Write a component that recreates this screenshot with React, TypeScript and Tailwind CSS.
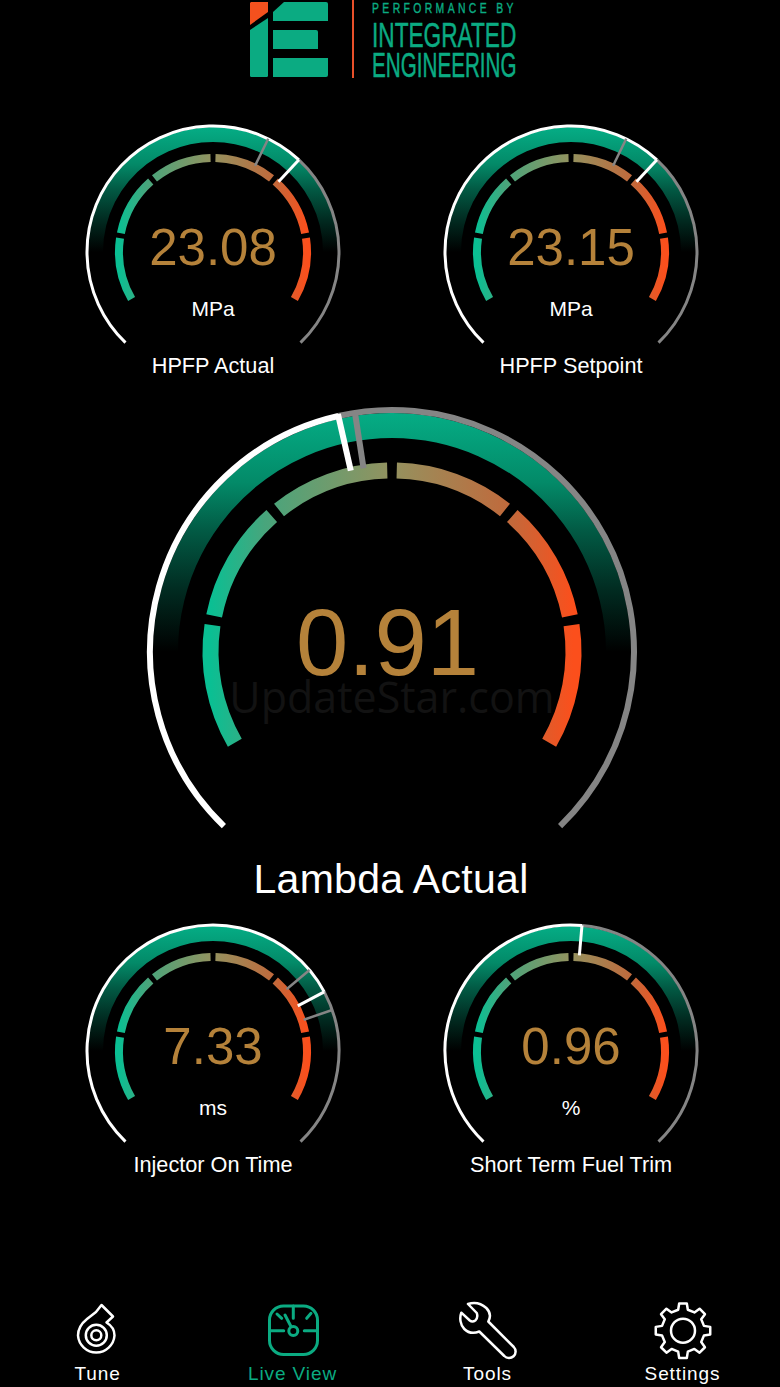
import React from 'react';

const polar = (cx: number, cy: number, r: number, deg: number) => {
  const a = ((deg - 90) * Math.PI) / 180;
  return [cx + r * Math.cos(a), cy + r * Math.sin(a)];
};

const arc = (cx: number, cy: number, r: number, from: number, to: number) => {
  const [x1, y1] = polar(cx, cy, r, from);
  const [x2, y2] = polar(cx, cy, r, to);
  return `M${x1} ${y1} A${r} ${r} 0 ${to - from > 180 ? 1 : 0} 1 ${x2} ${y2}`;
};

const spoke = (cx: number, cy: number, r1: number, r2: number, deg: number) => {
  const [x1, y1] = polar(cx, cy, r1, deg);
  const [x2, y2] = polar(cx, cy, r2, deg);
  return `M${x1} ${y1} L${x2} ${y2}`;
};

const SEGMENTS = [-120, -80, -40, 0, 40, 80];

interface DialProps {
  id: string;
  width: number;
  height: number;
  cx: number;
  cy: number;
  scale: number;
  white: number;
  grays: number[];
}

const Dial: React.FC<DialProps> = ({ id, width, height, cx, cy, scale, white, grays }) => {
  const ringR = scale === 1 ? 126 : 242;
  const ringW = scale === 1 ? 3 : 6;
  const bandR = scale === 1 ? 117.5 : 226.5;
  const bandW = scale === 1 ? 15 : 25;
  const segR = scale === 1 ? 94 : 181.5;
  const segW = scale === 1 ? 8 : 16;
  const needleOuter = scale === 1 ? 126 : 244;
  const needleInner = scale === 1 ? 96 : 186;

  return (
    <svg width={width} height={height} viewBox={`0 0 ${width} ${height}`} className="block">
      <defs>
        <linearGradient id={`${id}-band`} gradientUnits="userSpaceOnUse" x1="0" y1={cy - ringR} x2="0" y2={cy}>
          <stop offset="0" stopColor="#05ae86" />
          <stop offset="0.3" stopColor="#038a68" />
          <stop offset="0.5" stopColor="#025a44" />
          <stop offset="0.75" stopColor="#012a20" />
          <stop offset="1" stopColor="#000000" />
        </linearGradient>
        <linearGradient id={`${id}-seg`} gradientUnits="userSpaceOnUse" x1={cx - segR} y1="0" x2={cx + segR} y2="0">
          <stop offset="0" stopColor="#0abf93" />
          <stop offset="0.15" stopColor="#48a57c" />
          <stop offset="0.5" stopColor="#94925f" />
          <stop offset="0.82" stopColor="#c06a3c" />
          <stop offset="1" stopColor="#fb4f1c" />
        </linearGradient>
      </defs>
      <path d={arc(cx, cy, bandR, -100, 100)} fill="none" stroke={`url(#${id}-band)`} strokeWidth={bandW} />
      {SEGMENTS.slice(0, 5).map((deg, i) => (
        <path key={deg} d={arc(cx, cy, segR, deg + (i === 0 ? 0 : 1.5), SEGMENTS[i + 1] - 1.5)} fill="none" stroke={`url(#${id}-seg)`} strokeWidth={segW} />
      ))}
      <path d={arc(cx, cy, segR, 81.5, 120)} fill="none" stroke={`url(#${id}-seg)`} strokeWidth={segW} />
      <path d={arc(cx, cy, ringR, white, 136)} fill="none" stroke="#858585" strokeWidth={ringW} />
      <path d={arc(cx, cy, ringR, -136, white)} fill="none" stroke="#ffffff" strokeWidth={ringW} />
      {grays.map((deg) => (
        <path key={deg} d={spoke(cx, cy, needleOuter, needleInner, deg)} stroke="#858585" strokeWidth={scale === 1 ? 2.5 : 6} />
      ))}
      <path d={spoke(cx, cy, needleOuter, needleInner, white)} stroke="#ffffff" strokeWidth={scale === 1 ? 3 : 6} />
    </svg>
  );
};

interface SmallGaugeProps {
  id: string;
  value: string;
  unit: string;
  label: string;
  white: number;
  grays: number[];
}

const SmallGauge: React.FC<SmallGaugeProps> = ({ id, value, unit, label, white, grays }) => (
  <div className="w-[260px]">
    <div className="relative h-[226px]">
      <Dial id={id} width={260} height={226} cx={130} cy={132} scale={1} white={white} grays={grays} />
      <div className="absolute left-0 top-[98px] w-full text-center text-[51px] leading-[60px] text-[#b5823a]">{value}</div>
      <div className="absolute left-0 top-[177px] w-full text-center text-[21px] leading-[24px] text-white">{unit}</div>
    </div>
    <div className="mt-[8px] text-center text-[21.7px] leading-[24px] text-white">{label}</div>
  </div>
);

const Logo = () => (
  <div className="flex h-[120px] items-start pl-[250px]">
    <svg width="80" height="80" viewBox="0 0 80 80" className="block shrink-0">
      <path d="M1 2 H18 V12 L0 25 V3 Z" fill="#f4511e" />
      <path d="M0 30 L18 18 V75.5 Q18 77 16.5 77 H1.5 Q0 77 0 75.5 Z" fill="#0bab82" />
      <path d="M23 12 L34 2 H76 Q78 2 78 4 V21 H23 Z" fill="#0bab82" />
      <path d="M23 30 H66 Q68 30 68 32 V49 H23 Z" fill="#0bab82" />
      <path d="M23 58 H78 V75 Q78 77 76 77 H23 Z" fill="#0bab82" />
    </svg>
    <div className="ml-[22px] h-[78px] w-[2px] shrink-0 bg-[#e8502a]" />
    <div className="ml-[18px] w-[150px] text-[#0bab82]">
      <div className="h-[16px] origin-left scale-x-[0.74] whitespace-nowrap text-[14px] leading-[16px] tracking-[4.6px] [-webkit-text-stroke:0.4px_#0bab82]">PERFORMANCE BY</div>
      <div className="mt-[3px] h-[29px] origin-left scale-x-[0.647] whitespace-nowrap text-[35px] leading-[32px] [-webkit-text-stroke:0.5px_#0bab82]">INTEGRATED</div>
      <div className="h-[30px] origin-left scale-x-[0.59] whitespace-nowrap text-[35px] leading-[34px] [-webkit-text-stroke:0.5px_#0bab82]">ENGINEERING</div>
    </div>
  </div>
);

const gearPath = () => {
  const pts: string[] = [];
  for (let i = 0; i < 8; i++) {
    const c = i * 45;
    const steps: [number, number][] = [
      [21.5, c - 13],
      [27.5, c - 8],
      [27.5, c + 8],
      [21.5, c + 13],
    ];
    steps.forEach(([r, deg]) => {
      const [x, y] = polar(30, 30, r, deg);
      pts.push(`${pts.length === 0 ? 'M' : 'L'}${x} ${y}`);
    });
  }
  return pts.join(' ') + ' Z';
};

const TuneIcon = () => (
  <svg width="60" height="60" viewBox="0 0 60 60" fill="none" stroke="#ffffff" strokeWidth="2.5" strokeLinejoin="round" className="block">
    <path d="M33.5 7 L45 18.5 L38.5 24.5 C43.5 27.5 46.5 32 46.5 37.5 A18.3 18.3 0 0 1 10 37.5 C10 30 14 25 19 21 L28 14 Z" />
    <circle cx="28.3" cy="37.3" r="10.5" />
    <circle cx="28.3" cy="37.3" r="5" />
  </svg>
);

const LiveIcon = () => (
  <svg width="60" height="60" viewBox="0 0 60 60" fill="none" stroke="#0bab82" strokeWidth="3" strokeLinecap="round" className="block">
    <rect x="6.5" y="8" width="48" height="48.5" rx="14" />
    <path d="M30.3 8 V20.3 M6.5 32.7 H20.7 M41.3 32.7 H54.5 M14 16 L18.7 20.3 M43.7 20.3 L48 15.3 M22 17 L28 28.5" />
    <circle cx="30.3" cy="33" r="4.5" />
  </svg>
);

const ToolsIcon = () => (
  <svg width="60" height="60" viewBox="0.7 -2 60 60" fill="none" stroke="#ffffff" strokeWidth="2.5" strokeLinejoin="round" className="block overflow-visible">
    <path d="M10.7 4 C17 2 24 3.5 29 8 C33 12 33.5 17 31 21.5 L56.5 47 A6.5 6.5 0 0 1 47 56 L22 31.5 C17 33.5 11 33 7 29 C3 25 2 18 4 12.7 L12.5 20.5 Q15 22.5 18 20.5 Q21 18 19.5 13 Z" />
  </svg>
);

const SettingsIcon = () => (
  <svg width="60" height="60" viewBox="0 -2.7 60 60" fill="none" stroke="#ffffff" strokeWidth="2.5" strokeLinejoin="round" className="block overflow-visible">
    <path d={gearPath()} />
    <circle cx="30" cy="30" r="12" />
  </svg>
);

const tabs = [
  { label: 'Tune', icon: <TuneIcon />, color: 'text-white' },
  { label: 'Live View', icon: <LiveIcon />, color: 'text-[#0bab82]' },
  { label: 'Tools', icon: <ToolsIcon />, color: 'text-white' },
  { label: 'Settings', icon: <SettingsIcon />, color: 'text-white' },
];

export default function App() {
  return (
    <div className="flex h-[1387px] w-[780px] flex-col overflow-hidden bg-black font-['Liberation_Sans',sans-serif]">
      <Logo />

      <div className="flex gap-[98px] pl-[83px]">
        <SmallGauge id="g1" value="23.08" unit="MPa" label="HPFP Actual" white={43} grays={[26]} />
        <SmallGauge id="g2" value="23.15" unit="MPa" label="HPFP Setpoint" white={43} grays={[26]} />
      </div>

      <div className="relative ml-[142px] mt-[24px] h-[430px] w-[500px]">
        <Dial id="big" width={500} height={430} cx={250} cy={250} scale={2} white={-12.8} grays={[-8.8]} />
        <div className="absolute left-0 top-[186px] w-full pr-[9px] text-center text-[94px] leading-[110px] text-[#b5823a]">0.91</div>
        <div className="absolute left-0 top-[270px] w-full text-center font-['Open_Sans',sans-serif] text-[43px] leading-[50px] text-[#121212]">UpdateStar.com</div>
      </div>
      <div className="mt-[23px] ml-[2px] text-center text-[41px] leading-[48px] tracking-[0.3px] text-white">Lambda Actual</div>

      <div className="mt-[16px] flex gap-[98px] pl-[83px]">
        <SmallGauge id="g3" value="7.33" unit="ms" label="Injector On Time" white={62} grays={[50, 71]} />
        <SmallGauge id="g4" value="0.96" unit="%" label="Short Term Fuel Trim" white={5} grays={[]} />
      </div>

      <div className="mt-auto grid grid-cols-4">
        {tabs.map((tab) => (
          <div key={tab.label} className="flex flex-col items-center">
            {tab.icon}
            <span className={`mt-[5px] mb-[2px] text-[19px] leading-[22px] tracking-[0.9px] ${tab.color}`}>{tab.label}</span>
          </div>
        ))}
      </div>
    </div>
  );
}
